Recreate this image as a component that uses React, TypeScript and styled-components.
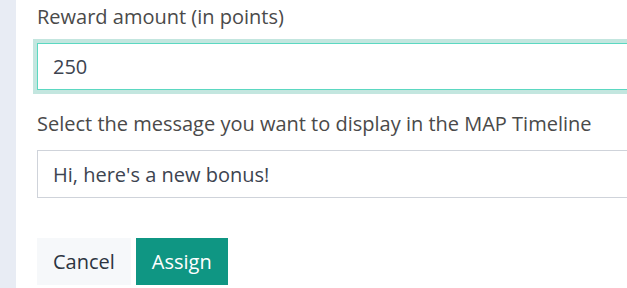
import styled, { createGlobalStyle } from "styled-components";

const GlobalStyle = createGlobalStyle`
    html, body {
        margin: 0;
        padding: 0;
        background: #ffffff;
        overflow: hidden;
    }
    body {
        font-family: "Open Sans", "Noto Sans", sans-serif;
    }
`;

const Page = styled.div`
    display: flex;
    width: 627px;
    height: 288px;
    overflow: hidden;
`;

const Rail = styled.div`
    width: 16px;
    flex-shrink: 0;
    background: #e8ecf4;
`;

const Panel = styled.div`
    flex: 1;
    display: flex;
    flex-direction: column;
    padding: 3px 0 0 21px;
`;

const Field = styled.div`
    display: flex;
    flex-direction: column;
    gap: 12px;
    margin-bottom: 20px;
`;

const Label = styled.label`
    font-size: 20px;
    line-height: 28px;
    color: #4a4a4a;
    white-space: nowrap;
`;

const Input = styled.input<{ $focused?: boolean }>`
    box-sizing: border-box;
    width: 620px;
    height: ${(p) => (p.$focused ? "47px" : "48px")};
    padding: 0 15px;
    font-family: inherit;
    font-size: 20px;
    color: #3d4450;
    background: #ffffff;
    border: 1px solid ${(p) => (p.$focused ? "#5bd8c1" : "#cfd3da")};
    border-radius: 0;
    outline: none;
    box-shadow: ${(p) => (p.$focused ? "0 0 0 4px #c3e6df" : "none")};
`;

const Actions = styled.div`
    display: flex;
    gap: 5px;
    margin-top: 20px;
`;

const Button = styled.button<{ $primary?: boolean }>`
    box-sizing: border-box;
    height: 47px;
    padding: 0 16px;
    font-family: inherit;
    font-size: 20px;
    border: none;
    border-radius: 0;
    cursor: pointer;
    background: ${(p) => (p.$primary ? "#0f9683" : "#f6f8fa")};
    color: ${(p) => (p.$primary ? "#ffffff" : "#2c3440")};
`;

export default function App() {
    return (
        <Page>
            <GlobalStyle />
            <Rail />
            <Panel>
                <Field>
                    <Label>Reward amount (in points)</Label>
                    <Input $focused defaultValue="250" />
                </Field>
                <Field>
                    <Label>Select the message you want to display in the MAP Timeline</Label>
                    <Input defaultValue="Hi, here's a new bonus!" />
                </Field>
                <Actions>
                    <Button>Cancel</Button>
                    <Button $primary>Assign</Button>
                </Actions>
            </Panel>
        </Page>
    );
}
